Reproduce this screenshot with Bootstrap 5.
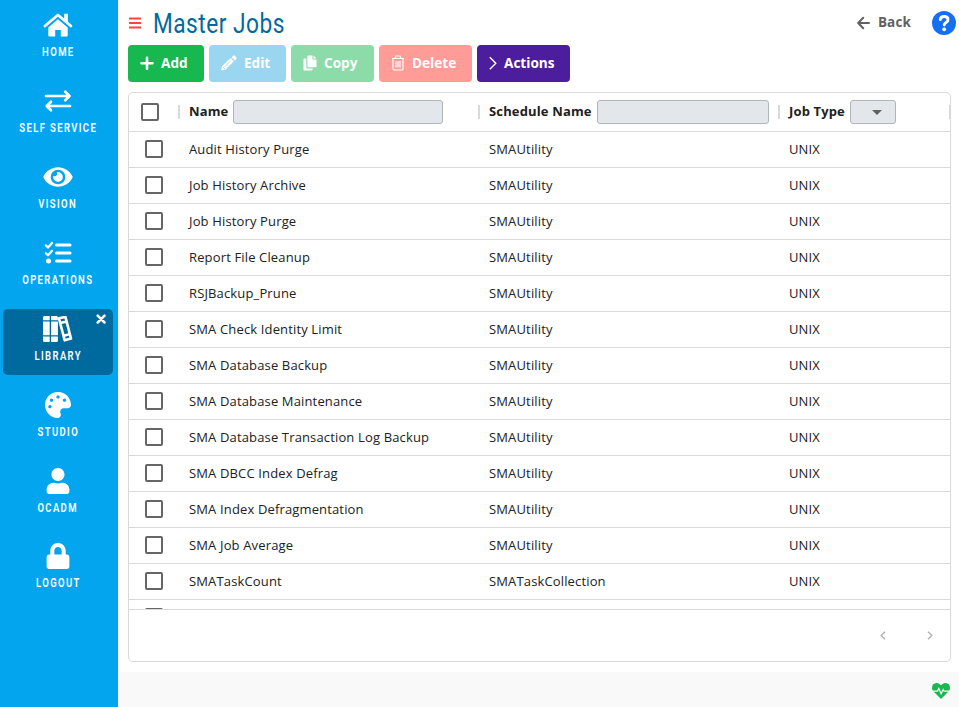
<!DOCTYPE html>
<html lang="en">
<head>
<meta charset="utf-8">
<meta name="viewport" content="width=device-width, initial-scale=1">
<title>Master Jobs</title>
<link href="https://cdn.jsdelivr.net/npm/bootstrap@5.3.0/dist/css/bootstrap.min.css" rel="stylesheet">
<style>
body{font-family:"Open Sans","Noto Sans",sans-serif;font-size:13px;letter-spacing:.145px;color:#212121;height:707px;overflow:hidden;background:#fff}
svg{display:block;flex:none}
.sidebar{width:118px;background:#03a5ef;padding:5px 5px 0 3px;gap:10px}
.side-item{height:66px;color:#fff;border-radius:5px;padding-top:7px;position:relative}
.side-item.current{background:#006a9f}
.side-item svg.ico{width:30px;height:26px;margin:0 auto}
.side-label{font:600 12.5px/16px Roboto,sans-serif;letter-spacing:1.8px;white-space:nowrap;display:flex;justify-content:center;margin-top:6px}
.side-label span{transform:scaleX(.76)}
.side-item:last-child .side-label,.side-item:last-child .ico{transform:translateY(-1px)}
.side-close{position:absolute;right:7px;top:5px}
.top-line{height:45px;padding:0 3px 0 11px}
.page-name{font:400 28px/36px Roboto,sans-serif;color:#006a9f;margin:2px 0 0 12px;transform:scaleX(.81);transform-origin:0 50%;letter-spacing:.6px;white-space:nowrap}
.back-link{color:#616161;font-weight:700;font-size:13.5px}
.help{margin-left:21px}
.tool-row{gap:5px;padding-left:10px}
.tool{height:37px;border-radius:4px;border:0;color:#fff;font-weight:700;font-size:13.6px;letter-spacing:0;line-height:34px;padding:0 0 2px 12px}
.tool svg{margin:1px 7px 0 0}
.t-add{width:76px;background:#18b851}.t-edit{width:77px;background:#9bd6f0}.t-copy{width:83px;background:#8bdca8}.t-del{width:93px;background:#ff9c98}.t-act{width:93px;background:#4c1d9c}
.sheet{margin:10px 8px 10px 10px;height:570px;border:1px solid #d9d9d9;border-radius:5px;overflow:hidden}
.sheet-head{height:39px;border-bottom:1px solid #d9d9d9;font-weight:700;flex:none}
.sheet-body{height:477px;overflow:hidden;flex:none}
.sheet-row{height:36px;border-bottom:1px solid #d9d9d9}
.c-check{width:50px;flex:none}.c-name,.c-sched{width:300px;flex:none;padding-left:10px}.c-type{width:171px;flex:none;padding-left:10px}
.sheet-row .c-check{padding-bottom:1px}
.tick{width:18px;height:18px;border:2px solid #666;border-radius:2px;margin-left:16px}
.sheet-head .tick{margin-left:12px}
.sheet-head .c-name,.sheet-head .c-sched,.sheet-head .c-type{position:relative}
.grip{width:2px;height:14px;background:#d9d9d9;position:absolute;left:-1px;top:5px}
.grip.end{left:auto;right:-1px}
.filter{height:24px;background:#e3e7eb;border:1px solid #b0b5ba;border-radius:3px;margin-left:4.800px}
.f-name{width:210px}.f-sched{width:172px;margin-left:5.300px}.f-type{width:46px;padding-left:21px}
.sheet-foot{border-top:1px solid #d9d9d9;padding-right:17px}
.pager-prev{margin-right:41px}
.status{background:#f9f9f9;height:35px;padding:2px 9px 0 0}
</style>
</head>
<body>
<div class="d-flex h-100">
<nav class="sidebar d-flex flex-column flex-shrink-0">
 <div class="side-item"><svg class="ico" viewBox="0 0 30 26"><path d="M1.9 14 14.9 3 27.9 14" fill="none" stroke="#fff" stroke-width="2.700" stroke-linecap="round" stroke-linejoin="round"/><path d="M21.200 1.800h3.700v9l-3.700-3.200zM14.900 7.200l9.800 8.300v8.100q0 .9-.9.9h-6v-6.400h-5.600v6.400h-6q-.9 0-.9-.9v-8.100z" fill="#fff"/></svg><div class="side-label"><span>HOME</span></div></div>
 <div class="side-item"><svg class="ico" viewBox="0 0 30 26"><path d="M3 8h23M22.200 3.800 26.500 8l-4.300 4.200M27 18H4M8 13.800 3.700 18 8 22.200" fill="none" stroke="#fff" stroke-width="2.700" stroke-linecap="round" stroke-linejoin="round"/></svg><div class="side-label"><span>SELF SERVICE</span></div></div>
 <div class="side-item"><svg class="ico" viewBox="0 0 576 512"><path fill="#fff" d="M572.52 241.4C518.29 135.59 410.93 64 288 64S57.68 135.64 3.48 241.41a32.35 32.35 0 0 0 0 29.19C57.71 376.41 165.07 448 288 448s230.32-71.64 284.52-177.41a32.35 32.35 0 0 0 0-29.19zM288 400a144 144 0 1 1 144-144 143.93 143.93 0 0 1-144 144zm0-240a95.31 95.31 0 0 0-25.31 3.79 47.85 47.85 0 0 1-66.9 66.9A95.78 95.78 0 1 0 288 160z"/></svg><div class="side-label"><span>VISION</span></div></div>
 <div class="side-item"><svg class="ico" viewBox="0 0 30 26"><path d="M13.500 5H27M13.500 13H27M13.500 21H27" stroke="#fff" stroke-width="3.100" stroke-linecap="round"/><path d="M2.900 5.400 5 7.500 9 3M2.900 13.200 5 15.300 9 10.800" fill="none" stroke="#fff" stroke-width="2.200" stroke-linecap="round" stroke-linejoin="round"/><circle cx="5.500" cy="21" r="2.500" fill="#fff"/></svg><div class="side-label"><span>OPERATIONS</span></div></div>
 <div class="side-item current"><svg class="ico" viewBox="0 0 30 26"><path fill="#fff" d="M1.500 0H6.700V4.200H0V1.500Q0 0 1.500 0M0 5.400h6.700v13.800H0zM0 20.500h6.700V26H1.500Q0 26 0 24.500zM8.100 0h5.300q1.500 0 1.500 1.500v2.700H8.100zM8.100 5.400h6.800v13.800H8.100zM8.100 20.500h6.800v4q0 1.500-1.500 1.500H8.100z"/><path d="m15.900 2.200 6.500-1.300 5.600 21.600-6.300 1.800zM17.500 7l5.900-1.500M20.700 19.800l5.900-1.500" fill="none" stroke="#fff" stroke-width="2.600" stroke-linejoin="round"/></svg><svg class="side-close" width="10" height="10" viewBox="0 0 10 10"><path d="m1.700 1.700 6.800 6.800m0-6.800L1.700 8.500" stroke="#fff" stroke-width="2.500" stroke-linecap="round"/></svg><div class="side-label"><span>LIBRARY</span></div></div>
 <div class="side-item"><svg class="ico" viewBox="0 0 512 512"><path fill="#fff" d="M204.3 5C104.9 24.4 24.8 104.3 5.2 203.4c-37 187 131.7 326.4 258.8 306.7 41.2-6.4 61.4-54.6 42.5-91.7-23.1-45.4 9.9-98.4 60.9-98.4h79.7c35.8 0 64.8-29.6 64.9-65.3C511.5 97.1 368.1-26.9 204.3 5zM96 320c-17.7 0-32-14.3-32-32s14.3-32 32-32 32 14.3 32 32-14.3 32-32 32zm32-128c-17.7 0-32-14.3-32-32s14.3-32 32-32 32 14.3 32 32-14.3 32-32 32zm128-64c-17.7 0-32-14.3-32-32s14.3-32 32-32 32 14.3 32 32-14.3 32-32 32zm128 64c-17.7 0-32-14.3-32-32s14.3-32 32-32 32 14.3 32 32-14.3 32-32 32z"/></svg><div class="side-label"><span>STUDIO</span></div></div>
 <div class="side-item"><svg class="ico" viewBox="0 0 448 512"><path fill="#fff" d="M224 256c70.7 0 128-57.3 128-128S294.7 0 224 0 96 57.3 96 128s57.3 128 128 128zm89.6 32h-16.7c-22.2 10.2-46.9 16-72.9 16s-50.6-5.8-72.9-16h-16.7C60.2 288 0 348.2 0 422.4V464c0 26.500 21.500 48 48 48h352c26.500 0 48-21.500 48-48v-41.600c0-74.200-60.200-134.400-134.400-134.400z"/></svg><div class="side-label"><span>OCADM</span></div></div>
 <div class="side-item"><svg class="ico" viewBox="0 0 448 512"><path fill="#fff" d="M400 224h-24v-72C376 68.200 307.800 0 224 0S72 68.200 72 152v72H48c-26.500 0-48 21.500-48 48v192c0 26.500 21.500 48 48 48h352c26.500 0 48-21.500 48-48V272c0-26.500-21.500-48-48-48zm-104 0H152v-72c0-39.700 32.300-72 72-72s72 32.300 72 72v72z"/></svg><div class="side-label"><span>LOGOUT</span></div></div>
</nav>
<main class="flex-grow-1 d-flex flex-column">
 <header class="top-line d-flex align-items-center">
  <svg width="12" height="12" viewBox="0 0 12 12"><path d="M0 1.500h12M0 6h12M0 10.500h12" stroke="#ff4340" stroke-width="2"/></svg>
  <h1 class="page-name">Master Jobs</h1>
  <a class="back-link d-flex align-items-center ms-auto text-decoration-none" href="#"><svg width="13" height="14" viewBox="0 0 13 14" style="margin-right:8px"><path d="M12 7H1.500M6.200 1.800 1.200 7l5 5.200" fill="none" stroke="#616161" stroke-width="2" stroke-linecap="round" stroke-linejoin="round"/></svg>Back</a>
  <svg class="help" width="24" height="24" viewBox="0 0 24 24"><circle cx="12" cy="12" r="12" fill="#146ff5"/><path d="M8.300 8.600Q8.700 5.500 12.200 5.500q3.800 0 3.800 3.200 0 1.700-1.900 2.800-1.900 1.100-1.900 2.500" fill="none" stroke="#fff" stroke-width="2.900" stroke-linecap="round"/><circle cx="12.200" cy="18.300" r="1.900" fill="#fff"/></svg>
 </header>
 <div class="tool-row d-flex">
  <button class="tool t-add d-flex align-items-center"><svg width="14" height="14" viewBox="0 0 14 14"><path d="M7 1.700v11M1.500 7.200h11" stroke="#fff" stroke-width="2.600" stroke-linecap="round"/></svg>Add</button>
  <button class="tool t-edit d-flex align-items-center"><svg width="16" height="16" viewBox="0 0 16 16"><path fill="#fff" d="m10.600 2.200 1.500-1.500q.8-.7 1.600 0l1.600 1.600q.7.800 0 1.600l-1.500 1.500zM9.700 3.100l3.200 3.200-8.200 8.200L.6 15.400q-.5.100-.4-.4l.9-4z"/><path d="m4 11.500 5.500-5.500M2 12l2 2" stroke="#9bd6f0" stroke-width=".9"/></svg>Edit</button>
  <button class="tool t-copy d-flex align-items-center"><svg width="14" height="16" viewBox="0 0 14 16"><path fill="#fff" d="M5.200.5h4.300v4h4v7q0 .8-.8.800H5.200q-.8 0-.8-.8V1.300q0-.8.8-.8M10.500.5l3 3h-3zM.500 4.300q0-.8.800-.8h2v8.700q0 1.200 1.200 1.200H9.500v1.300q0 .8-.8.800H1.300q-.8 0-.8-.8z"/></svg>Copy</button>
  <button class="tool t-del d-flex align-items-center"><svg width="14" height="16" viewBox="0 0 14 16"><path d="M1 3.500h12M4 3.300 5 1h4l1 2.300M2 3.500v10.200q0 1.300 1.300 1.300h7.400q1.300 0 1.300-1.300V3.500M5 6v6.500M7 6v6.500M9 6v6.500" fill="none" stroke="#fff" stroke-width="1.200"/></svg>Delete</button>
  <button class="tool t-act d-flex align-items-center"><svg width="8" height="14" viewBox="0 0 8 14"><path d="m.8 1.300 6 6-6 6" fill="none" stroke="#fff" stroke-width="1.400"/></svg>Actions</button>
 </div>
 <section class="sheet d-flex flex-column">
  <div class="sheet-head d-flex align-items-center">
   <div class="c-check"><div class="tick"></div></div>
   <div class="c-name d-flex align-items-center"><i class="grip"></i>Name<div class="filter f-name"></div></div>
   <div class="c-sched d-flex align-items-center"><i class="grip"></i>Schedule Name<div class="filter f-sched"></div></div>
   <div class="c-type d-flex align-items-center"><i class="grip"></i>Job Type<div class="filter f-type d-flex align-items-center"><svg width="10" height="5" viewBox="0 0 10 5"><path d="M0 0h10L5 5z" fill="#616161"/></svg></div><i class="grip end"></i></div>
  </div>
  <div class="sheet-body" id="rows"></div>
  <div class="sheet-foot flex-grow-1 d-flex align-items-center justify-content-end">
   <svg class="pager-prev" width="6" height="9" viewBox="0 0 6 9"><path d="M5 .7 1.200 4.500 5 8.300" fill="none" stroke="#b5b5b5" stroke-width="1.500"/></svg>
   <svg width="6" height="9" viewBox="0 0 6 9"><path d="m1 .7 3.800 3.800L1 8.300" fill="none" stroke="#b5b5b5" stroke-width="1.500"/></svg>
  </div>
 </section>
 <footer class="status d-flex align-items-center justify-content-end">
  <svg width="18" height="16" viewBox="0 0 18 16"><path fill="#18b851" d="M9 2.300Q6.800 0 4.600 0 0 .2 0 5q0 1.400 1 3l8 8 8-8q1-1.600 1-3 0-4.800-4.600-5Q11.200 0 9 2.300"/><path d="M.5 8.200h5L6.800 5.500l2.300 5.300 2-4.300.9 1.700h5.500" fill="none" stroke="#f9f9f9" stroke-width="1.200"/></svg>
 </footer>
</main>
</div>
<script src="https://cdn.jsdelivr.net/npm/bootstrap@5.3.0/dist/js/bootstrap.bundle.min.js"></script>
<script>
const jobs=["Audit History Purge","Job History Archive","Job History Purge","Report File Cleanup","RSJBackup_Prune","SMA Check Identity Limit","SMA Database Backup","SMA Database Maintenance","SMA Database Transaction Log Backup","SMA DBCC Index Defrag","SMA Index Defragmentation","SMA Job Average","SMATaskCount",""];
document.getElementById("rows").innerHTML=jobs.map(n=>`<div class="sheet-row d-flex align-items-center"><div class="c-check"><div class="tick"></div></div><div class="c-name">${n}</div><div class="c-sched">${n?(n==="SMATaskCount"?"SMATaskCollection":"SMAUtility"):""}</div><div class="c-type">${n?"UNIX":""}</div></div>`).join("");
</script>
</body>
</html>
